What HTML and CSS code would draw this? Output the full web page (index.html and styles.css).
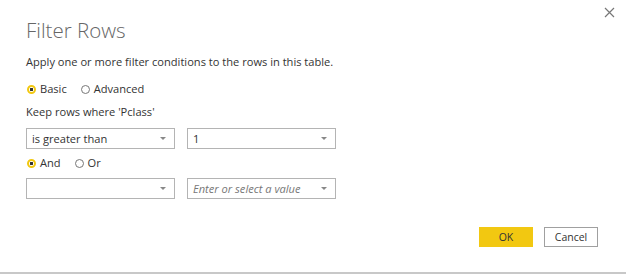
FILE: index.html
```html
<!DOCTYPE html>
<html lang="en">

<head>
    <meta http-equiv="Content-Type" content="text/html; charset=UTF-8">
    <link rel="stylesheet" href="styles.css">
</head>

<body>
    <div class="dialog">
        <button class="close" title="Close">
            <svg width="11" height="11" viewBox="0 0 11 11">
                <path d="M1 1 L10 10 M10 1 L1 10" stroke="#777" stroke-width="1.2" fill="none" />
            </svg>
        </button>

        <h1 class="title">Filter Rows</h1>
        <p class="intro">Apply one or more filter conditions to the rows in this table.</p>

        <div class="radios mode">
            <label class="radio checked"><span class="dot"></span>Basic</label>
            <label class="radio"><span class="dot"></span>Advanced</label>
        </div>

        <p class="keep">Keep rows where 'Pclass'</p>

        <div class="row">
            <div class="select"><span>is greater than</span><i class="arrow"></i></div>
            <div class="select"><span>1</span><i class="arrow"></i></div>
        </div>

        <div class="radios join">
            <label class="radio checked"><span class="dot"></span>And</label>
            <label class="radio"><span class="dot"></span>Or</label>
        </div>

        <div class="row second">
            <div class="select"><span></span><i class="arrow"></i></div>
            <div class="select"><span class="placeholder">Enter or select a value</span><i class="arrow"></i></div>
        </div>

        <div class="buttons">
            <button class="btn ok">OK</button>
            <button class="btn cancel">Cancel</button>
        </div>
    </div>
</body>

</html>
```

FILE: styles.css
```css
body {
    margin: 0;
    background-color: #ffffff;
    font-family: 'Segoe UI', 'Open Sans', 'Noto Sans', sans-serif;
    color: #333333;
}

.dialog {
    position: relative;
    height: 272px;
    border-bottom: 2px solid #c8c8c8;
    padding: 0 28px 0 26px;
    display: flex;
    flex-direction: column;
}

.close {
    position: absolute;
    top: 7px;
    right: 11px;
    border: none;
    background: none;
    padding: 0;
    width: 11px;
    height: 11px;
}

.close svg {
    display: block;
}

.title {
    margin: 15px 0 0 0;
    font-size: 20.5px;
    font-weight: 300;
    color: #666666;
    line-height: 30px;
}

.intro {
    margin: 9px 0 0 0;
    font-size: 11.1px;
    line-height: 16px;
}

.radios {
    display: flex;
    gap: 13px;
    font-size: 11.1px;
    line-height: 16px;
}

.mode {
    margin-top: 11px;
}

.join {
    margin-top: 6px;
}

.radio {
    display: flex;
    align-items: center;
    gap: 4px;
}

.dot {
    box-sizing: border-box;
    width: 9px;
    height: 9px;
    border-radius: 50%;
    border: 1px solid #777777;
    margin-left: 1px;
}

.radio.checked .dot {
    border: 2px solid #f2c811;
    background: radial-gradient(circle, #333333 0 1.4px, #ffffff 1.8px);
}

.keep {
    margin: 7px 0 0 0;
    font-size: 11.1px;
    line-height: 16px;
}

.row {
    display: flex;
    gap: 12px;
    margin-top: 8px;
}

.row.second {
    margin-top: 7px;
}

.select {
    box-sizing: border-box;
    width: 149px;
    height: 21px;
    border: 1px solid #b4b4b4;
    display: flex;
    align-items: center;
    justify-content: space-between;
    padding: 0 8px 0 5px;
    font-size: 11.1px;
}

.placeholder {
    font-style: italic;
    color: #777777;
}

.arrow {
    width: 0;
    height: 0;
    border-left: 3px solid transparent;
    border-right: 3px solid transparent;
    border-top: 3px solid #888888;
}

.buttons {
    display: flex;
    justify-content: flex-end;
    gap: 11px;
    margin-top: auto;
    margin-bottom: 25px;
}

.btn {
    box-sizing: border-box;
    width: 54px;
    height: 20px;
    font-family: inherit;
    font-size: 10.5px;
    color: #333333;
    padding: 0;
}

.ok {
    background-color: #f2c811;
    border: none;
}

.cancel {
    background-color: #ffffff;
    border: 1px solid #a0a0a0;
}
```
